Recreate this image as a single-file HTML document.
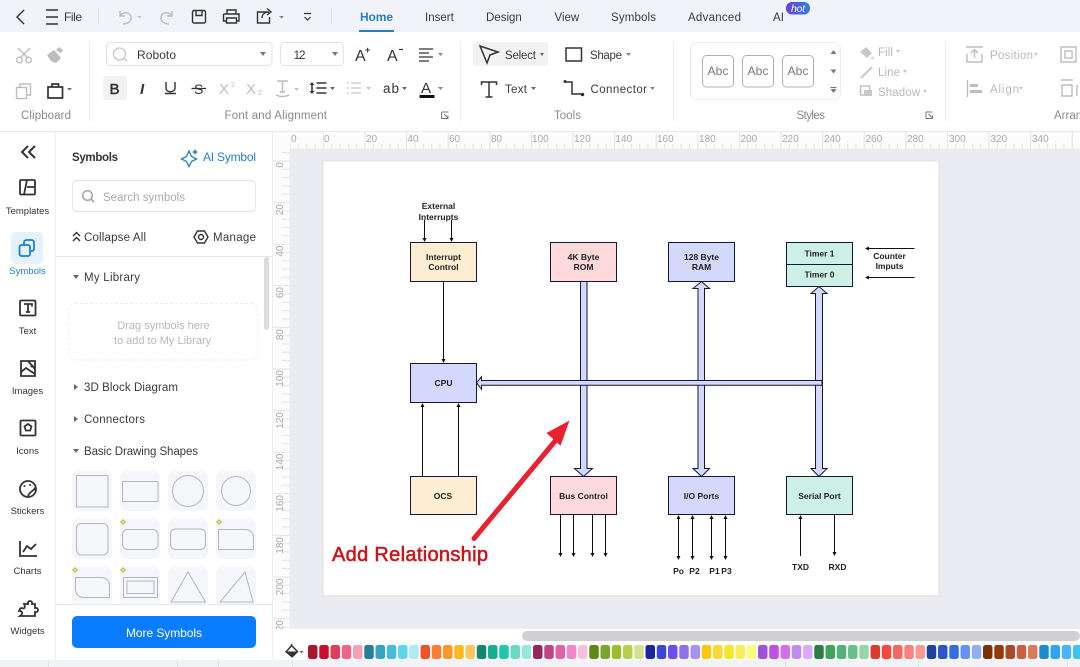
<!DOCTYPE html>
<html><head><meta charset="utf-8"><style>
html,body{margin:0;padding:0;background:#fff;width:1080px;height:667px;overflow:hidden}
svg{display:block;font-family:"Liberation Sans",sans-serif}
.t{font-size:11.5px;fill:#3a3a3a}
.g{font-size:11.5px;fill:#b8b8b8}
.l{font-size:11.5px;fill:#8a8a8a}
.r{font-size:10px;fill:#a8a8a8}
.rail{font-size:9.5px;fill:#333;text-anchor:middle}
.d{font-size:8.5px;font-weight:bold;fill:#222;text-anchor:middle}
.i{fill:none;stroke:#333;stroke-width:1.4}
.ig{fill:none;stroke:#bdbdbd;stroke-width:1.4}
.s{fill:#d2d9fc;stroke:#14163c;stroke-width:1}
.ln{stroke:#111;stroke-width:1;fill:none}
.b{stroke:#14163c;stroke-width:1}
.tile{fill:#f5f6fa}
.sh{fill:#fff;stroke:#b4b6bc;stroke-width:1}
</style></head><body>
<svg width="1080" height="667" viewBox="0 0 1080 667" xmlns="http://www.w3.org/2000/svg">
<defs>
<pattern id="hr" x="323" y="132" width="41.6" height="17" patternUnits="userSpaceOnUse"><path d="M.5 0V17M8.8 12V17M17.1 12V17M25.4 12V17M33.7 12V17" stroke="#e4e4e4" stroke-width="1"/></pattern>
<pattern id="vr" x="273" y="160.500" width="17" height="41.6" patternUnits="userSpaceOnUse"><path d="M0 .5H17M9 8.8H17M9 17.1H17M9 25.4H17M9 33.7H17" stroke="#e4e4e4" stroke-width="1"/></pattern>
<linearGradient id="hot" x1="0" x2="1"><stop offset="0" stop-color="#6a3fd8"/><stop offset="1" stop-color="#2f7fe8"/></linearGradient>
</defs>
<rect width="1080" height="667" fill="#fff"/>
<!-- top bar -->
<rect width="1080" height="32" fill="#f1f3f9"/>
<path class="i" d="M24 10l-7 7 7 7"/>
<path class="i" d="M46 10h12M46 17h12M46 24h12" stroke-width="1.200"/>
<text x="64" y="21" font-size="12" fill="#3a3a3a" textLength="18">File</text>
<path d="M98.500 8v16M331.500 8v16" stroke="#dfe1e6"/>
<path class="ig" d="M120 16c2-4 10-5 11 1 1 4-3 7-8 7M120 11v5h5"/>
<path d="M137 16l2.500 2.500L142 16z" fill="#c5c5c5"/>
<path class="ig" d="M172 16c-2-4-10-5-11 1-1 4 3 7 8 7M172 11v5h-5"/>
<rect class="i" x="192.500" y="10.500" width="13" height="12.500" rx="1.500"/><path class="i" d="M196 10.500v5h6v-5"/>
<path class="i" d="M227 14v-4h9v4M223.500 14h15.500v7h-3M227 21h-3.500v-7M226.500 18h10v5h-10z"/>
<path class="i" d="M267 12h-9.500v11h12v-6M262 18c0-4 3-6 7-6M267 8.500l4 3.500-4 3"/>
<path d="M279 16l2.500 2.500L284 16z" fill="#888"/>
<path d="M304 13.500h7M304.500 17l3 3 3-3" fill="none" stroke="#333" stroke-width="1.200"/>
<g font-size="11.500" fill="#3a3a3a">
<text x="360" y="21" font-size="12" font-weight="bold" fill="#2a7dbf" textLength="33">Home</text>
<text x="425" y="21">Insert</text>
<text x="486" y="21">Design</text>
<text x="554.500" y="21">View</text>
<text x="611" y="21" textLength="45">Symbols</text>
<text x="688" y="21" textLength="53">Advanced</text>
<text x="773" y="21" textLength="11">AI</text>
</g>
<rect x="359" y="30" width="35" height="2" fill="#2a7dbf"/>
<rect x="786" y="2" width="24" height="12.500" rx="6" fill="url(#hot)"/>
<text x="791" y="12" font-size="10.500" font-style="italic" fill="#fff" textLength="14">hot</text>
<!-- ribbon -->
<path d="M89.500 42v80M460.500 42v80M673.500 42v80M945.500 42v80" stroke="#eeeeee"/>
<path class="ig" d="M18 48l10 10M30 48l-10 10" stroke-width="1.600"/><circle class="ig" cx="19.500" cy="60" r="2.800"/><circle class="ig" cx="28.500" cy="60" r="2.800"/>
<path d="M47 55l7-5 7 8-5 5-5-2zM56 50l3-3 4 3-2 3" fill="#bdbdbd"/>
<rect class="ig" x="16.500" y="87.500" width="10" height="11"/><path class="ig" d="M20 87v-3h10.500v11h-3.500"/>
<path d="M48 87h14.500v11H48z" fill="none" stroke="#333" stroke-width="1.700"/><path d="M52 87v-3h6.500v3" fill="none" stroke="#333" stroke-width="1.700"/>
<path d="M67 88l2.500 2.500L72 88z" fill="#666"/>
<text class="l" x="21" y="119" textLength="50">Clipboard</text>
<rect x="106.500" y="42.500" width="165.500" height="23" rx="4" fill="#fff" stroke="#e2e2e2"/>
<circle cx="119.500" cy="54" r="6" fill="none" stroke="#c5c5c5" stroke-width="1.300"/><path d="M124 58.500l3 3" stroke="#c5c5c5" stroke-width="1.300"/>
<text x="137" y="59" font-size="12" fill="#3a3a3a" textLength="39">Roboto</text>
<path d="M260 52h6l-3 4z" fill="#777"/>
<rect x="280.500" y="42.500" width="63" height="23" rx="4" fill="#fff" stroke="#e2e2e2"/>
<text x="293.500" y="59" font-size="12" fill="#3a3a3a" textLength="12">12</text>
<path d="M332 52h6l-3 4z" fill="#777"/>
<text x="355" y="61" font-size="16" fill="#333">A</text><text x="365" y="53" font-size="9" font-weight="bold" fill="#333">+</text>
<text x="387" y="61" font-size="16" fill="#333">A</text><path d="M399 49.500h4" stroke="#333" stroke-width="1.200"/>
<path d="M419 49h14M419 53h10M419 57h14M419 61h10" stroke="#333" stroke-width="1.300"/>
<path d="M438 53l2.500 3 2.500-3z" fill="#888"/>
<rect x="103" y="76" width="24" height="24" rx="3" fill="#f2f2f2"/>
<text x="109.500" y="94" font-size="15" fill="#333" stroke="#333" stroke-width=".5">B</text>
<text x="140" y="94" font-size="15" font-weight="bold" font-style="italic" fill="#333">I</text>
<path class="i" d="M166 82v6c0 5 9 5 9 0v-6M165 93.500h11"/>
<text x="194" y="94" font-size="14" fill="#333">S</text><path d="M191.500 88.500h14.500" stroke="#333" stroke-width="1.300"/>
<text x="219" y="94" font-size="15" fill="#bdbdbd">X</text><text x="231" y="87" font-size="7" fill="#bdbdbd">2</text>
<text x="246" y="94" font-size="15" fill="#bdbdbd">X</text><text x="258" y="95" font-size="7" fill="#bdbdbd">2</text>
<path class="ig" d="M277 81h11M282.500 81v11M280 92h5M276 95c4 2 9 2 13 0"/>
<path d="M294 88l2.500 3 2.500-3z" fill="#c5c5c5"/>
<path d="M312 82l-2.500 3h5zM312 94l-2.500-3h5z" fill="#333"/><path d="M312 84v8M316.500 83h10M316.500 88h10M316.500 93h10" stroke="#333" stroke-width="1.500"/>
<path d="M330 87l2.500 3 2.500-3z" fill="#666"/>
<path d="M351 83h10M351 88h10M351 93h10M347 83h2M347 88h2M347 93h2" stroke="#c5c5c5" stroke-width="1.300"/>
<path d="M366 87l2.500 3 2.500-3z" fill="#c5c5c5"/>
<text x="383" y="93" font-size="13.500" fill="#333" textLength="16">ab</text>
<path d="M402 87l2.500 3 2.500-3z" fill="#666"/>
<text x="421" y="93" font-size="15" fill="#333">A</text><rect x="419.500" y="95" width="15" height="3" fill="#111"/>
<path d="M438 87l2.500 3 2.500-3z" fill="#888"/>
<text class="l" x="224.500" y="119" textLength="102.500">Font and Alignment</text>
<path d="M441.500 112h7M441.500 112v6.500h6.500v-3M444 114l4 4" fill="none" stroke="#777"/>
<rect x="473" y="42" width="75" height="24" rx="4" fill="#f2f2f2"/>
<path d="M480 46l18 6-8 3-3 8z" fill="none" stroke="#333" stroke-width="1.500"/>
<text class="t" x="505" y="59" textLength="31">Select</text>
<path d="M540 53l2 3 2-3z" fill="#666"/>
<path d="M481.500 85v-3h15v3M489 82v15M485.500 97h7" fill="none" stroke="#333" stroke-width="1.500"/>
<text class="t" x="505" y="93" textLength="22">Text</text>
<path d="M531 87l2.500 3 2.500-3z" fill="#666"/>
<rect x="566" y="48" width="15.500" height="13" fill="none" stroke="#333" stroke-width="1.500"/>
<text class="t" x="590" y="59" textLength="32">Shape</text>
<path d="M626 53l2.500 3 2.500-3z" fill="#888"/>
<path d="M566 82h6v12h9" fill="none" stroke="#333" stroke-width="1.500"/><circle cx="565" cy="81.500" r="1.500" fill="#333"/><circle cx="582.500" cy="94.500" r="1.800" fill="#333"/>
<text class="t" x="590.500" y="93" textLength="56.500">Connector</text>
<path d="M650 87l2.500 3 2.500-3z" fill="#888"/>
<text class="l" x="554" y="119" textLength="27">Tools</text>
<rect x="690.500" y="42.500" width="150" height="57" rx="6" fill="#fff" stroke="#ececec"/>
<g fill="#fff" stroke="#b0b0b0"><rect x="702.500" y="55.500" width="31" height="31.500" rx="4"/><rect x="742.500" y="55.500" width="31" height="31.500" rx="4"/><rect x="782.500" y="55.500" width="31" height="31.500" rx="4"/></g>
<g font-size="12" fill="#777"><text x="707.500" y="75" textLength="21">Abc</text><text x="747.500" y="75" textLength="21">Abc</text><text x="787.500" y="75" textLength="21">Abc</text></g>
<path d="M830.500 54l3-4 3 4zM830.500 69.500l3 4 3-4zM830.500 89h6l-3 4z" fill="#777"/><path d="M830.500 87.500h6" stroke="#777"/>
<path d="M860 52l6-5 6 6-5 5zM872 56l2 3h-3z" fill="#c8c8c8"/>
<text class="g" x="878" y="56" textLength="15">Fill</text><path d="M896 50l2 3 2-3z" fill="#c5c5c5"/>
<path d="M861 78l11-11" stroke="#c8c8c8" stroke-width="2"/>
<text class="g" x="878" y="76" textLength="22">Line</text><path d="M903 70l2 3 2-3z" fill="#c5c5c5"/>
<rect x="860.500" y="86" width="9" height="9" class="ig"/><rect x="864" y="90" width="8" height="6" fill="#c8c8c8"/>
<text class="g" x="878" y="96" textLength="42">Shadow</text><path d="M923 90l2 3 2-3z" fill="#c5c5c5"/>
<text class="l" x="796.500" y="119" textLength="28.500">Styles</text>
<path d="M926 112h6.500M926 112v6.500h6.500v-3M928.500 114l4 4" fill="none" stroke="#777"/>
<path class="ig" d="M966 47h17M974.500 58v-8M971 53l3.500-3.500 3.500 3.500M967 54v8h15v-8"/>
<text class="g" x="990" y="59" textLength="43">Position</text><path d="M1034 53l2 3 2-3z" fill="#c5c5c5"/>
<path d="M967.500 80v17" stroke="#bdbdbd" stroke-width="1.300"/><rect x="970" y="84" width="8" height="3" fill="#bdbdbd"/><rect x="970" y="90" width="12" height="3" fill="#bdbdbd"/>
<text class="g" x="990" y="93" textLength="29">Align</text><path d="M1019 87l2 3 2-3z" fill="#c5c5c5"/>
<rect class="ig" x="1061" y="47" width="15" height="15"/><rect x="1065" y="51" width="7" height="7" class="ig"/>
<path class="ig" d="M1061 80h12M1062 85h10v11h-10zM1077 85v11"/>
<text class="l" x="1054" y="119">Arrange</text>
<path d="M0 131.500H1080" stroke="#e9e9ee"/>
<!-- canvas -->
<rect x="273" y="132" width="807" height="497" fill="#ebebf2"/>
<rect x="273" y="132" width="807" height="17" fill="#fcfcfc"/>
<rect x="273" y="132" width="17" height="497" fill="#fcfcfc"/>
<rect x="290" y="132" width="790" height="17" fill="url(#hr)"/>
<rect x="273" y="149" width="17" height="480" fill="url(#vr)"/>
<path d="M290 149H1080M290 149V629" stroke="#ebebf2"/>
<g class="r">
<text x="291" y="142" class="r">0</text><text x="324" y="142" class="r">0</text><text x="366" y="142" class="r">20</text><text x="407.500" y="142" class="r">40</text><text x="449" y="142" class="r">60</text><text x="491" y="142" class="r">80</text><text x="532" y="142" class="r">100</text><text x="574" y="142" class="r">120</text><text x="615.500" y="142" class="r">140</text><text x="657" y="142" class="r">160</text><text x="699" y="142" class="r">180</text><text x="740.500" y="142" class="r">200</text><text x="782" y="142" class="r">220</text><text x="824" y="142" class="r">240</text><text x="865.500" y="142" class="r">260</text><text x="907" y="142" class="r">280</text><text x="949" y="142" class="r">300</text><text x="990.500" y="142" class="r">320</text><text x="1032" y="142" class="r">340</text>
<text class="r" text-anchor="end" transform="translate(283 162) rotate(-90)">0</text>
<text class="r" text-anchor="end" transform="translate(283 204) rotate(-90)">20</text>
<text class="r" text-anchor="end" transform="translate(283 245.500) rotate(-90)">40</text>
<text class="r" text-anchor="end" transform="translate(283 287) rotate(-90)">60</text>
<text class="r" text-anchor="end" transform="translate(283 329) rotate(-90)">80</text>
<text class="r" text-anchor="end" transform="translate(283 370) rotate(-90)">100</text>
<text class="r" text-anchor="end" transform="translate(283 412) rotate(-90)">120</text>
<text class="r" text-anchor="end" transform="translate(283 453.500) rotate(-90)">140</text>
<text class="r" text-anchor="end" transform="translate(283 495) rotate(-90)">160</text>
<text class="r" text-anchor="end" transform="translate(283 537) rotate(-90)">180</text>
<text class="r" text-anchor="end" transform="translate(283 578.500) rotate(-90)">200</text>
<text class="r" text-anchor="end" transform="translate(283 620) rotate(-90)">220</text>
</g>
<rect x="323" y="161" width="616" height="435" fill="#fff" stroke="#dfdfe4"/>
<!-- diagram -->
<g class="b">
<rect x="410.500" y="242.500" width="66" height="39" fill="#fdeed3"/>
<rect x="550.500" y="242.500" width="66" height="39" fill="#fdd9d9"/>
<rect x="668.500" y="242.500" width="66" height="39" fill="#d2d9fc"/>
<rect x="786.500" y="242.500" width="66" height="44" fill="#cdf0e6"/><path d="M786.500 264.500h66"/>
<rect x="410.500" y="363.500" width="66" height="39" fill="#d2d9fc"/>
<rect x="410.500" y="476.500" width="66" height="38" fill="#fdeed3"/>
<rect x="550.500" y="476.500" width="66" height="38" fill="#fdd9d9"/>
<rect x="668.500" y="476.500" width="66" height="38" fill="#d2d9fc"/>
<rect x="786.500" y="476.500" width="66" height="38" fill="#cdf0e6"/>
</g>
<path class="s" d="M580.500 281.500h6.500V468.500h5.500l-9 8-9-8h6z"/>
<path class="s" d="M701.500 281.500l8 7h-5V468.500h5l-8 8-8.500-8h5V288.500h-5z"/>
<path class="s" d="M819 286.500l8 7h-4.500V468.500h4.500l-8 8-8-8h4.500V293.500h-4.500z"/>
<path class="s" d="M476.500 382.800l5-6v3.700H822V385.300H481.500v4z"/>
<g class="ln">
<path d="M443.500 281v78M424.500 220v18M451.500 220v18M422.500 476v-69M458.500 476v-69"/>
<path d="M560.500 514v40M573.500 514v40M592.500 514v40M605.500 514v40"/>
<path d="M678.500 518v38M692.500 518v38M711.500 518v38M725.500 518v38"/>
<path d="M800.500 556v-37M834.500 514v38M869 248.500h45.500M869 277.500h45.500"/>
</g>
<g fill="#111">
<path d="M441.500 359h4l-2 4zM422.500 238h4l-2 4zM449.500 238h4l-2 4zM420.500 407h4l-2-4zM456.500 407h4l-2-4z"/>
<path d="M558.500 553h4l-2 4zM571.500 553h4l-2 4zM590.500 553h4l-2 4zM603.500 553h4l-2 4z"/>
<path d="M676.500 519h4l-2-4zM690.500 519h4l-2-4zM709.500 519h4l-2-4zM723.500 519h4l-2-4zM676.500 556h4l-2 4zM690.500 556h4l-2 4zM709.500 556h4l-2 4zM723.500 556h4l-2 4z"/>
<path d="M798.500 519h4l-2-4zM832.500 552h4l-2 4zM869 246.500v4l-4-2zM869 275.500v4l-4-2z"/>
</g>
<text class="d" x="438.500" y="209">External</text><text class="d" x="438.500" y="220">Interrupts</text>
<text class="d" x="443.500" y="260">Interrupt</text><text class="d" x="443.500" y="270">Control</text>
<text class="d" x="583.500" y="260">4K Byte</text><text class="d" x="583.500" y="270">ROM</text>
<text class="d" x="701.500" y="260">128 Byte</text><text class="d" x="701.500" y="270">RAM</text>
<text class="d" x="819.500" y="256.500">Timer 1</text><text class="d" x="819.500" y="277.500">Timer 0</text>
<text class="d" x="889.500" y="259">Counter</text><text class="d" x="889.500" y="269">Imputs</text>
<text class="d" x="443.500" y="386">CPU</text><text class="d" x="443" y="499">OCS</text>
<text class="d" x="583.500" y="499">Bus Control</text><text class="d" x="701.500" y="499">I/O Ports</text><text class="d" x="819.500" y="499">Serial Port</text>
<text class="d" x="678.500" y="574">Po</text><text class="d" x="694.500" y="574">P2</text><text class="d" x="714.500" y="574">P1</text><text class="d" x="726.500" y="574">P3</text>
<text class="d" x="800.500" y="570">TXD</text><text class="d" x="837.500" y="570">RXD</text>
<path d="M474 538.500L556 440" stroke="#e8212e" stroke-width="5" stroke-linecap="round" fill="none"/>
<path d="M569.500 420.500L546.500 433L560.500 445.700z" fill="#e8212e"/>
<text x="332" y="561" font-size="20" fill="#c8151b" stroke="#c8151b" stroke-width=".55" textLength="156">Add Relationship</text>
<!-- rail -->
<path d="M55.500 132V660M272.500 132V660" stroke="#eeeef2"/>
<path d="M28 146l-6 6 6 6M35 146l-6 6 6 6" fill="none" stroke="#333" stroke-width="2"/>
<g fill="none" stroke="#333" stroke-width="1.800">
<rect x="20" y="180" width="15" height="14.500" rx="1"/><path d="M27 180l-3 14.500M27 187h8"/>
<rect x="20" y="300.500" width="15.500" height="15" rx="1"/>
<path d="M21 361h14v15H21zM21 372l5-4 9 6M28 361l7 8"/>
<rect x="20.500" y="420.500" width="15" height="15" rx="1"/><path d="M28 424l3.500 2.500-1.300 4h-4.400l-1.300-4z"/>
<path d="M36 489a8 8 0 1 0-8 8c4 0 8-3 8-8zM36 487c-3 5-6 4-8 9"/>
<path d="M20 541v15h17M23 552l4-6 4 3 5-5"/>
<path d="M24 604h4c-1-4 5-4 4 0h3v4c4-1 4 5 0 4v4H20c3-2 3-5-1-5 1-2 1-3 3-3 2 1 4 0 2-4z"/>
</g>
<circle cx="24.500" cy="486" r="1" fill="#333"/><circle cx="30" cy="485" r="1" fill="#333"/><circle cx="32" cy="366" r="1.500" fill="#333"/>
<path d="M24 304h8v2.500M28 304v8M26 312h4" fill="none" stroke="#333" stroke-width="1.800"/>
<rect x="11" y="232" width="32" height="32" rx="5" fill="#e5f1fd"/>
<g fill="none" stroke="#1a7fd1" stroke-width="1.800"><rect x="19.500" y="245" width="10.500" height="11" rx="2"/><path d="M24 245v-2.500c0-1.500 1-2.500 2.500-2.500h5c1.500 0 2.500 1 2.500 2.500v6c0 1.500-1 2.500-2.500 2.500H30"/></g>
<text class="rail" x="27.500" y="214">Templates</text>
<text class="rail" x="27.500" y="274" style="fill:#1a7fd1">Symbols</text>
<text class="rail" x="27.500" y="334">Text</text><text class="rail" x="27.500" y="394">Images</text>
<text class="rail" x="27.500" y="454">Icons</text><text class="rail" x="27.500" y="514">Stickers</text>
<text class="rail" x="27.500" y="574">Charts</text><text class="rail" x="27.500" y="634">Widgets</text>
<!-- panel -->
<text x="72" y="161" font-size="11.500" font-weight="bold" fill="#333" textLength="46">Symbols</text>
<path d="M189 151l2.500 5.500 5 2.500-5 2.500-2.500 5-2.500-5-5-2.500 5-2.500z" fill="none" stroke="#2a7dbf" stroke-width="1.300"/><path d="M195 149l1 2 2 1-2 1-1 2-1-2-2-1 2-1z" fill="#2a7dbf"/>
<text x="203" y="161" font-size="12" fill="#2a7dbf" textLength="53">AI Symbol</text>
<rect x="72.500" y="180.500" width="183" height="31" rx="5" fill="#fff" stroke="#e6e6e6"/>
<circle cx="87.500" cy="195.500" r="4.800" fill="none" stroke="#a8a8a8" stroke-width="1.600"/><path d="M91 199l3 3" stroke="#a8a8a8" stroke-width="1.800"/>
<text x="103" y="201" font-size="11.500" fill="#aaa" textLength="82">Search symbols</text>
<path class="i" d="M73 236l3.500-3.500 3.500 3.500M73 241l3.500-3.500 3.500 3.500" stroke-width="1"/>
<text class="t" x="84" y="241" textLength="62">Collapse All</text>
<path class="i" d="M197.500 231h7l3.500 6-3.500 6h-7l-3.500-6z" stroke-width="1.200"/><circle class="i" cx="201" cy="237" r="2.500" stroke-width="1.200"/>
<text class="t" x="213" y="241" textLength="43">Manage</text>
<path d="M56 256.500H272" stroke="#e8e8ec"/>
<rect x="264" y="257" width="5" height="73" rx="2.500" fill="#dcdde2"/>
<path d="M73 275h6l-3 4z" fill="#666"/>
<text class="t" x="84" y="281" textLength="56">My Library</text>
<rect x="69" y="303.500" width="189" height="56.500" rx="6" fill="#fff" stroke="#eee" stroke-dasharray="3 2"/>
<text x="163.500" y="329" font-size="11" fill="#b8b8b8" text-anchor="middle">Drag symbols here</text>
<text x="162.500" y="344" font-size="11" fill="#b8b8b8" text-anchor="middle">to add to My Library</text>
<path d="M74 384v6l4-3z" fill="#666"/><text class="t" x="84" y="391" textLength="94">3D Block Diagram</text>
<path d="M74 416v6l4-3z" fill="#666"/><text class="t" x="84" y="423" textLength="61">Connectors</text>
<path d="M73 449h6l-3 4z" fill="#666"/><text class="t" x="84" y="455" textLength="114">Basic Drawing Shapes</text>
<g class="tile">
<rect x="72" y="471" width="40" height="40" rx="6"/><rect x="120" y="471" width="40" height="40" rx="6"/><rect x="168" y="471" width="40" height="40" rx="6"/><rect x="216" y="471" width="40" height="40" rx="6"/>
<rect x="72" y="519" width="40" height="40" rx="6"/><rect x="120" y="519" width="40" height="40" rx="6"/><rect x="168" y="519" width="40" height="40" rx="6"/><rect x="216" y="519" width="40" height="40" rx="6"/>
<path d="M78 567h28a6 6 0 0 1 6 6v31H72v-31a6 6 0 0 1 6-6zM126 567h28a6 6 0 0 1 6 6v31h-40v-31a6 6 0 0 1 6-6zM174 567h28a6 6 0 0 1 6 6v31h-40v-31a6 6 0 0 1 6-6zM222 567h28a6 6 0 0 1 6 6v31h-40v-31a6 6 0 0 1 6-6z"/>
</g>
<g class="sh">
<rect x="76.500" y="475.500" width="31.500" height="31.500" style="fill:#f5f6fa"/>
<rect x="122.500" y="481.500" width="35.500" height="20" style="fill:#f5f6fa"/>
<circle cx="188" cy="491" r="15.500" style="fill:#f5f6fa"/><circle cx="236" cy="491" r="14.500" style="fill:#f5f6fa"/>
<rect x="76.500" y="523.500" width="31.500" height="31.500" rx="5" style="fill:#f5f6fa"/>
<rect x="122.500" y="529.500" width="35.500" height="20" rx="5" style="fill:#f5f6fa"/>
<rect x="170.500" y="529" width="35" height="20.500" rx="5" style="fill:#f5f6fa"/>
<path d="M218.500 529.500h27a8 8 0 0 1 8 8v12h-35z" style="fill:#f5f6fa"/>
<path d="M75.500 577.500h26a8 8 0 0 1 8 8v12h-26a8 8 0 0 1-8-8z" style="fill:#f5f6fa"/>
<rect x="123.500" y="577.500" width="34" height="20" style="fill:#f5f6fa"/><rect x="127" y="581" width="27" height="12.500" style="fill:#f5f6fa"/>
<path d="M188 572l17.500 30h-34.500z" style="fill:#f5f6fa"/>
<path d="M245 572l8 30h-33z" style="fill:#f5f6fa"/>
</g>
<g fill="#f0dc84" stroke="#a89a48" stroke-width=".6"><path d="M123 519.500l2.500 2.500-2.500 2.500-2.500-2.500zM219 519.500l2.500 2.500-2.500 2.500-2.500-2.500zM75 567.500l2.500 2.500-2.500 2.500-2.500-2.500zM123 567.500l2.500 2.500-2.500 2.500-2.500-2.500z"/></g>
<rect x="56" y="604" width="216" height="56" fill="#fff"/>
<path d="M56 604.500H272" stroke="#e8e8ec"/>
<rect x="72" y="616" width="184" height="32" rx="5" fill="#0a7cff"/>
<text x="126" y="637" font-size="12" fill="#fff" textLength="76">More Symbols</text>
<!-- bottom -->
<rect x="273" y="629" width="807" height="31" fill="#fff"/>
<rect x="522" y="631" width="558" height="10" rx="5" fill="#d0d0d2"/>
<rect x="0" y="660" width="1080" height="7" fill="#f1f3f9"/>
<path d="M48.500 660v7M177.500 660v7M218.500 660v7M292.500 660v7M785.500 660v7M918.500 660v7M1067.500 660v7" stroke="#e2e3e8"/>
<path d="M291.500 645.500l6 6-5 5-6-5z" fill="none" stroke="#333" stroke-width="1.500"/><path d="M286 652h11l-5 5zM291 645l1.500-1" fill="#333" stroke="#333"/><path d="M299.500 651l2 2.500 2-2.500z" fill="#666"/>
<g>
<rect x="308" y="645" width="9.500" height="14" rx="2.500" fill="#a8172c"/><rect x="319.250" y="645" width="9.500" height="14" rx="2.500" fill="#c8102e"/><rect x="330.500" y="645" width="9.500" height="14" rx="2.500" fill="#dd3e5c"/><rect x="341.750" y="645" width="9.500" height="14" rx="2.500" fill="#f0648a"/><rect x="353" y="645" width="9.500" height="14" rx="2.500" fill="#f5a0b4"/>
<rect x="364.250" y="645" width="9.500" height="14" rx="2.500" fill="#2a7d96"/><rect x="375.500" y="645" width="9.500" height="14" rx="2.500" fill="#36a3bf"/><rect x="386.750" y="645" width="9.500" height="14" rx="2.500" fill="#47bcd8"/><rect x="398" y="645" width="9.500" height="14" rx="2.500" fill="#5cd6ea"/><rect x="409.250" y="645" width="9.500" height="14" rx="2.500" fill="#aeeaf8"/>
<rect x="420.500" y="645" width="9.500" height="14" rx="2.500" fill="#f0532a"/><rect x="431.750" y="645" width="9.500" height="14" rx="2.500" fill="#fb7d33"/><rect x="443" y="645" width="9.500" height="14" rx="2.500" fill="#fd9a25"/><rect x="454.250" y="645" width="9.500" height="14" rx="2.500" fill="#fdb91d"/><rect x="465.500" y="645" width="9.500" height="14" rx="2.500" fill="#fdc55f"/>
<rect x="476.750" y="645" width="9.500" height="14" rx="2.500" fill="#12876f"/><rect x="488" y="645" width="9.500" height="14" rx="2.500" fill="#17ad91"/><rect x="499.250" y="645" width="9.500" height="14" rx="2.500" fill="#1fc8ad"/><rect x="510.500" y="645" width="9.500" height="14" rx="2.500" fill="#6bd8c4"/><rect x="521.750" y="645" width="9.500" height="14" rx="2.500" fill="#93eadb"/>
<rect x="533" y="645" width="9.500" height="14" rx="2.500" fill="#96245f"/><rect x="544.250" y="645" width="9.500" height="14" rx="2.500" fill="#c04485"/><rect x="555.500" y="645" width="9.500" height="14" rx="2.500" fill="#e062a5"/><rect x="566.750" y="645" width="9.500" height="14" rx="2.500" fill="#f285cb"/><rect x="578" y="645" width="9.500" height="14" rx="2.500" fill="#f3c0de"/>
<rect x="589.250" y="645" width="9.500" height="14" rx="2.500" fill="#5c8a16"/><rect x="600.500" y="645" width="9.500" height="14" rx="2.500" fill="#79a42e"/><rect x="611.750" y="645" width="9.500" height="14" rx="2.500" fill="#98bf2d"/><rect x="623" y="645" width="9.500" height="14" rx="2.500" fill="#b5d14c"/><rect x="634.250" y="645" width="9.500" height="14" rx="2.500" fill="#d3e08f"/>
<rect x="645.500" y="645" width="9.500" height="14" rx="2.500" fill="#1b25a0"/><rect x="656.750" y="645" width="9.500" height="14" rx="2.500" fill="#3b47d1"/><rect x="668" y="645" width="9.500" height="14" rx="2.500" fill="#6a4ff0"/><rect x="679.250" y="645" width="9.500" height="14" rx="2.500" fill="#9170ee"/><rect x="690.500" y="645" width="9.500" height="14" rx="2.500" fill="#a792f2"/>
<rect x="701.750" y="645" width="9.500" height="14" rx="2.500" fill="#fdc80c"/><rect x="713" y="645" width="9.500" height="14" rx="2.500" fill="#fcd935"/><rect x="724.250" y="645" width="9.500" height="14" rx="2.500" fill="#f3e62d"/><rect x="735.500" y="645" width="9.500" height="14" rx="2.500" fill="#f9ef55"/><rect x="746.750" y="645" width="9.500" height="14" rx="2.500" fill="#fcfc80"/>
<rect x="758" y="645" width="9.500" height="14" rx="2.500" fill="#9d52d8"/><rect x="769.250" y="645" width="9.500" height="14" rx="2.500" fill="#c050e0"/><rect x="780.500" y="645" width="9.500" height="14" rx="2.500" fill="#d070ee"/><rect x="791.750" y="645" width="9.500" height="14" rx="2.500" fill="#bf8cf0"/><rect x="803" y="645" width="9.500" height="14" rx="2.500" fill="#dcaafc"/>
<rect x="814.250" y="645" width="9.500" height="14" rx="2.500" fill="#2e7d46"/><rect x="825.500" y="645" width="9.500" height="14" rx="2.500" fill="#3fa35b"/><rect x="836.750" y="645" width="9.500" height="14" rx="2.500" fill="#52b078"/><rect x="848" y="645" width="9.500" height="14" rx="2.500" fill="#68bf8c"/><rect x="859.250" y="645" width="9.500" height="14" rx="2.500" fill="#95d6a9"/>
<rect x="870.500" y="645" width="9.500" height="14" rx="2.500" fill="#de3a30"/><rect x="881.750" y="645" width="9.500" height="14" rx="2.500" fill="#f5483f"/><rect x="893" y="645" width="9.500" height="14" rx="2.500" fill="#f56762"/><rect x="904.250" y="645" width="9.500" height="14" rx="2.500" fill="#fb8080"/><rect x="915.500" y="645" width="9.500" height="14" rx="2.500" fill="#fb9a90"/>
<rect x="926.750" y="645" width="9.500" height="14" rx="2.500" fill="#1f439f"/><rect x="938" y="645" width="9.500" height="14" rx="2.500" fill="#2b55c8"/><rect x="949.250" y="645" width="9.500" height="14" rx="2.500" fill="#336ee8"/><rect x="960.500" y="645" width="9.500" height="14" rx="2.500" fill="#6492f5"/><rect x="971.750" y="645" width="9.500" height="14" rx="2.500" fill="#8fb0ee"/>
<rect x="983" y="645" width="9.500" height="14" rx="2.500" fill="#7a3208"/><rect x="994.250" y="645" width="9.500" height="14" rx="2.500" fill="#933a0a"/><rect x="1005.500" y="645" width="9.500" height="14" rx="2.500" fill="#a84a2a"/><rect x="1016.750" y="645" width="9.500" height="14" rx="2.500" fill="#c96040"/><rect x="1028" y="645" width="9.500" height="14" rx="2.500" fill="#da7a58"/>
<rect x="1039.250" y="645" width="9.500" height="14" rx="2.500" fill="#1b8bd2"/><rect x="1050.500" y="645" width="9.500" height="14" rx="2.500" fill="#2fa3ee"/><rect x="1061.750" y="645" width="9.500" height="14" rx="2.500" fill="#4eb3f4"/><rect x="1073" y="645" width="9.500" height="14" rx="2.500" fill="#36c5f5"/>
</g>
</svg>
</body></html>
